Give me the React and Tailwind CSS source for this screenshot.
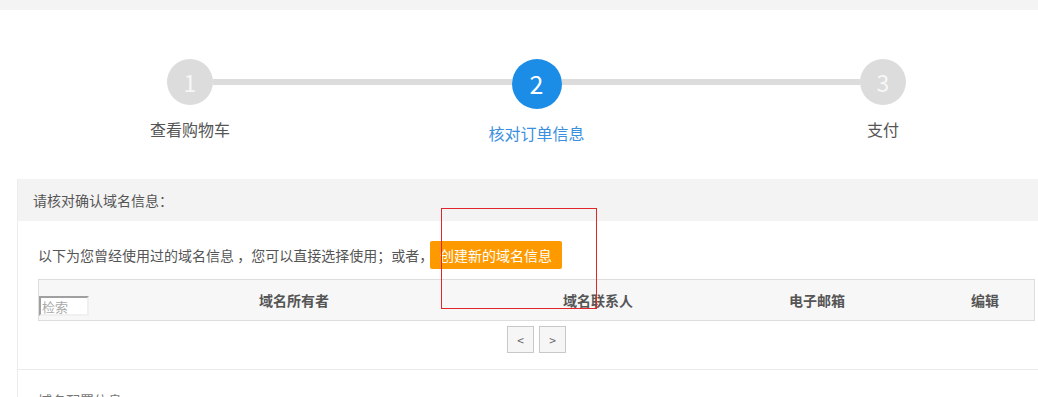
const font = { fontFamily: '"Noto Sans CJK SC", "Liberation Sans", sans-serif' };

const Step = ({ num, label, active }) => (
  <div className="relative z-10 flex w-[120px] flex-col items-center">
    <div
      className={
        active
          ? 'flex h-[50px] w-[50px] items-center justify-center rounded-full bg-[#1b8de6] text-[25px] text-white'
          : 'flex h-[46px] w-[46px] items-center justify-center rounded-full bg-[#dcdcdc] text-[23px] text-[#f7f7f7]'
      }
    >
      {num}
    </div>
    <div className={`mt-[13px] text-[16px] leading-[22px] ${active ? 'text-[#3b8fdf]' : 'text-[#555]'}`}>{label}</div>
  </div>
);

const StepLine = ({ className = '' }) => <div className={`z-0 mt-[20px] h-[6px] flex-1 bg-[#dcdcdc] ${className}`} />;

export default function App() {
  return (
    <div className="relative h-[397px] w-[1038px] overflow-hidden bg-white" style={font}>
      <div className="h-[10px] bg-[#f4f4f4]" />

      {/* steps */}
      <div className="h-[169px] pt-[49px]">
        <div className="ml-[130px] flex w-[813px] items-start">
          <Step num="1" label="查看购物车" />
          <StepLine className="-ml-[37px] -mr-[35px]" />
          <Step num="2" label="核对订单信息" active />
          <StepLine className="-ml-[35px] -mr-[37px]" />
          <Step num="3" label="支付" />
        </div>
      </div>

      {/* panel */}
      <div className="ml-[17px] border-l border-[#ececec]">
        <div className="flex h-[42px] items-center bg-[#f3f3f3] pl-[15px] text-[14px] text-[#555]">请核对确认域名信息：</div>

        <div className="border-b border-[#ebebeb] pb-[16px] pl-[20px] pr-[2px] pt-[20px]">
          <div className="flex h-[28px] items-center text-[14px] text-[#555]">
            <span className="w-[392px] whitespace-nowrap">以下为您曾经使用过的域名信息 ，您可以直接选择使用；或者，</span>
            <button className="h-[28px] rounded-[2px] bg-[#fe9a00] px-[10px] text-[14px] text-white">创建新的域名信息</button>
          </div>

          <div className="mt-[10px] flex h-[42px] w-[997px] border border-[#dddddd] bg-[#f7f7f7] text-[14px] font-bold text-[#555]">
            <div className="flex w-[51px] items-end pb-[4px]">
              <input
                placeholder="检索"
                className="h-[20px] w-[50px] border-2 border-b-[#f0f0f0] border-l-[#a0a0a0] border-r-[#f0f0f0] border-t-[#a0a0a0] bg-white px-[1px] text-[13px] font-normal text-[#555] placeholder:text-[#aaa]"
              />
            </div>
            <div className="flex w-[408px] items-center justify-center">域名所有者</div>
            <div className="flex w-[200px] items-center justify-center">域名联系人</div>
            <div className="flex w-[238px] items-center justify-center">电子邮箱</div>
            <div className="flex flex-1 items-center justify-center">编辑</div>
          </div>

          <div className="mt-[5px] flex w-[997px] justify-center gap-[5px]">
            <button className="flex h-[27px] w-[27px] items-center justify-center border border-[#c8c8c8] bg-[#f6f6f6] text-[12px] text-[#666]">&lt;</button>
            <button className="flex h-[27px] w-[27px] items-center justify-center border border-[#c8c8c8] bg-[#f6f6f6] text-[12px] text-[#666]">&gt;</button>
          </div>
        </div>

        <div className="pl-[20px] pt-[20px] text-[14px] text-[#777]">域名配置信息：</div>
      </div>

      {/* annotation */}
      <div className="absolute left-[441px] top-[208px] h-[101px] w-[156px] border border-[#e0262b]" />
    </div>
  );
}
